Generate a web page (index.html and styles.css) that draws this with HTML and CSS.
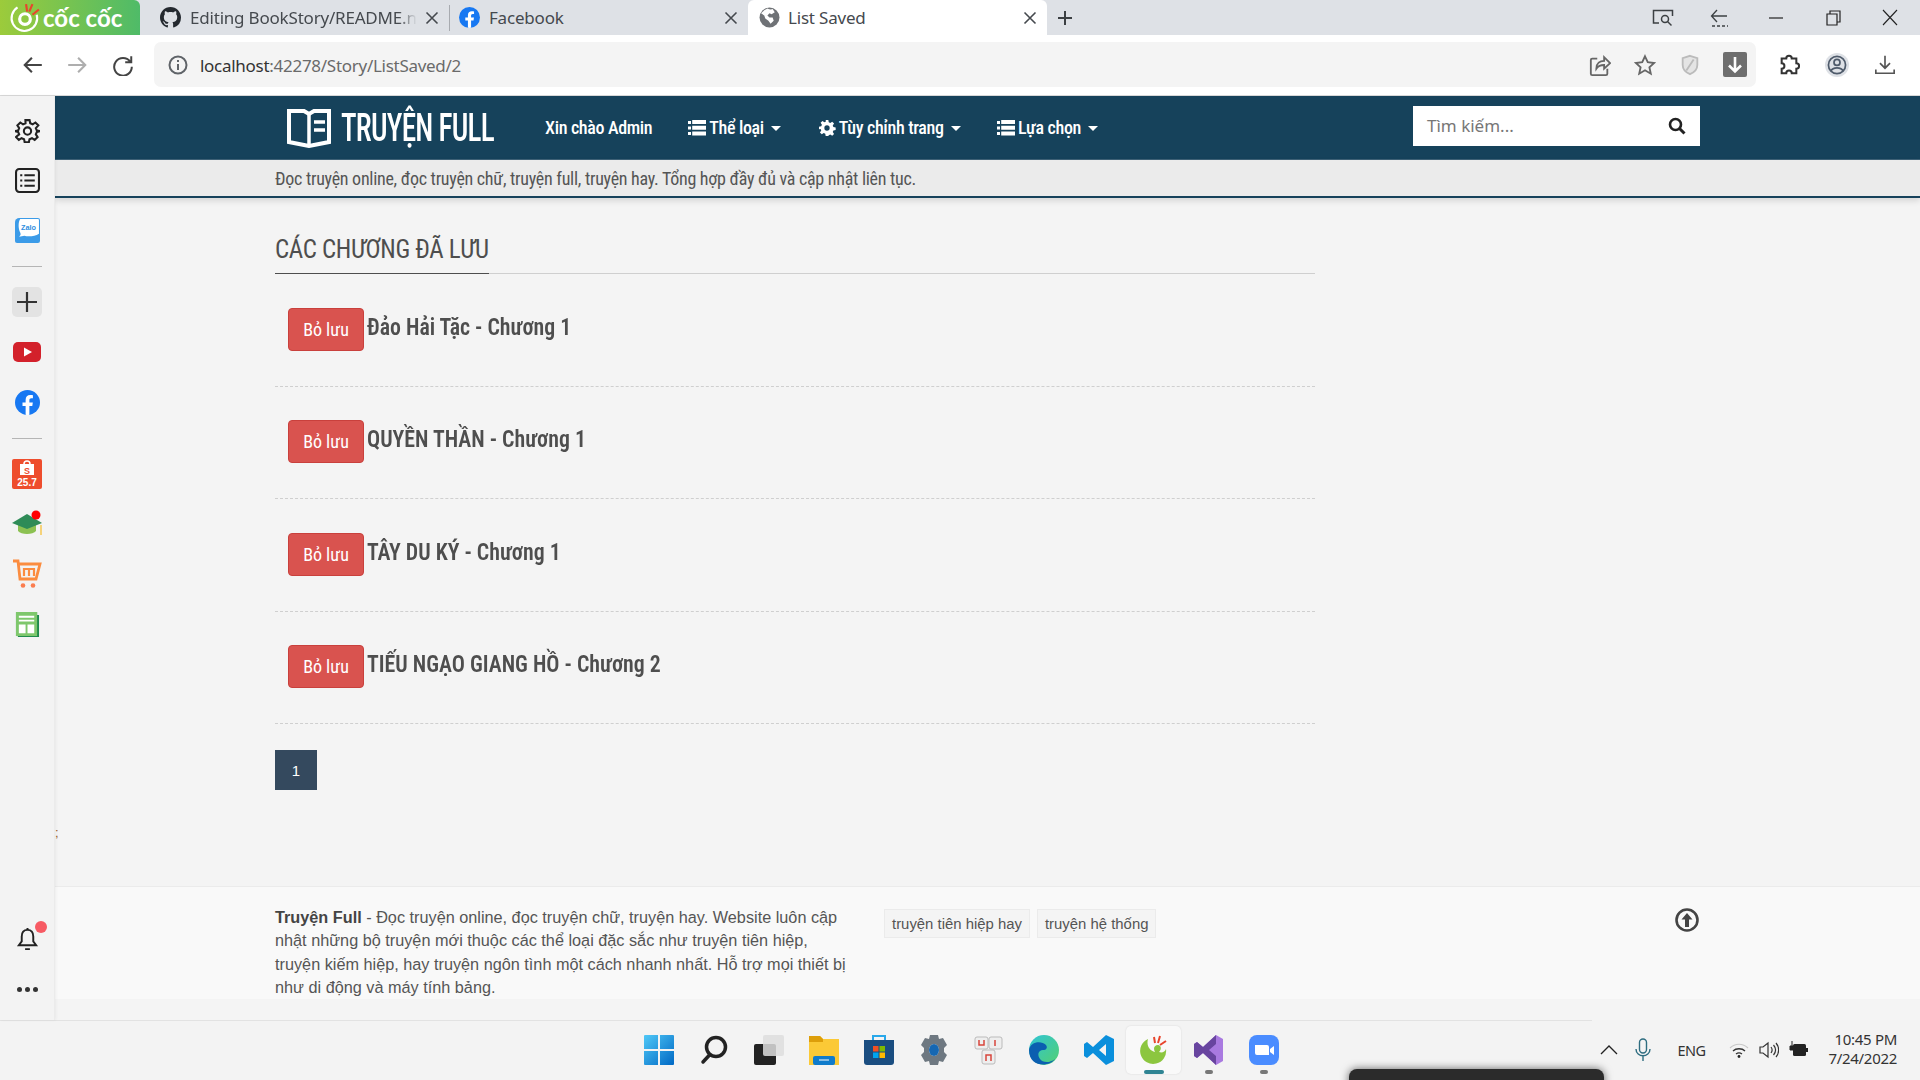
FILE: index.html
```html
<!DOCTYPE html>
<html lang="vi">
<head>
<meta charset="utf-8">
<title>List Saved</title>
<link rel="stylesheet" href="styles.css">
</head>
<body>
<svg class="defs" width="0" height="0">
  <symbol id="x" viewBox="0 0 14 14"><path d="M1.5 1.5l11 11M12.500 1.500l-11 11" fill="none" stroke="currentColor" stroke-width="1.6"/></symbol>
  <symbol id="fb" viewBox="0 0 24 24"><circle cx="12" cy="12" r="12" fill="#1778f2"/><path d="M16.600 15.400l.5-3.400h-3.300V9.800c0-.9.500-1.800 1.900-1.800h1.500V5.100s-1.300-.2-2.600-.2c-2.700 0-4.400 1.600-4.400 4.600V12H7.200v3.400h3v8.400c.6.100 1.200.2 1.800.2s1.200-.1 1.800-.2v-8.400z" fill="#fff"/></symbol>
  <symbol id="bars" viewBox="0 0 18 16"><path d="M0 1h3v3H0zM0 6.500h3v3H0zM0 12h3v3H0zM4.200 0H18v4H4.200zM4.200 5.800H18v4H4.200zM4.200 11.500H18v4H4.200z" fill="#fff"/></symbol>
</svg>

<header class="tabstrip">
  <div class="brand">
    <svg class="brand-mark" viewBox="0 0 30 30"><path d="M8 5a12 12 0 1 0 18 7" fill="none" stroke="#fff" stroke-width="2"/><circle cx="15" cy="16" r="5" fill="none" stroke="#fff" stroke-width="3"/><path d="M16 2l1 7M22 2l-3 7M28 7l-6 5" stroke="#e8452c" stroke-width="2"/></svg>
    <span class="brand-name">cốc cốc</span>
  </div>
  <div class="tab tab-github">
    <svg class="tab-icon" viewBox="0 0 16 16"><path fill="#24292f" d="M8 0C3.580 0 0 3.580 0 8c0 3.540 2.290 6.530 5.470 7.590.4.070.55-.17.55-.38 0-.19-.01-.82-.01-1.490-2.010.37-2.530-.49-2.690-.94-.09-.23-.48-.94-.82-1.130-.28-.15-.68-.52-.01-.53.63-.01 1.080.58 1.230.82.720 1.210 1.870.870 2.330.660.070-.520.280-.870.510-1.070-1.780-.2-3.640-.89-3.640-3.950 0-.870.310-1.590.820-2.150-.08-.2-.36-1.020.08-2.120 0 0 .67-.21 2.200.82.640-.18 1.320-.27 2-.27s1.360.09 2 .27c1.530-1.040 2.200-.82 2.200-.82.440 1.100.16 1.920.08 2.120.51.560.82 1.270.82 2.150 0 3.070-1.870 3.750-3.650 3.950.29.250.54.730.54 1.480 0 1.070-.01 1.930-.01 2.200 0 .21.150.46.550.38A8.010 8.010 0 0 0 16 8c0-4.420-3.580-8-8-8z"/></svg>
    <span class="tab-title tab-title-fade">Editing BookStory/README.n</span>
    <svg class="tab-close"><use href="#x"/></svg>
  </div>
  <i class="tab-sep"></i>
  <div class="tab tab-fb">
    <svg class="tab-icon"><use href="#fb"/></svg>
    <span class="tab-title">Facebook</span>
    <svg class="tab-close"><use href="#x"/></svg>
  </div>
  <div class="tab tab-active">
    <svg class="tab-icon" viewBox="0 0 20 20"><circle cx="10" cy="10" r="9.500" fill="#6f7276"/><path d="M8 1.500c2 1 4 1 5 .5l2 3-3 2-2-1-2 2 2 2 3 0 1 3-3 3-2-3-3-2-1-3-3-2 3-3z" fill="#fff"/></svg>
    <span class="tab-title">List Saved</span>
    <svg class="tab-close"><use href="#x"/></svg>
  </div>
  <svg class="tab-plus" viewBox="0 0 16 16"><path d="M8 1v14M1 8h14" stroke="#3c4043" stroke-width="2"/></svg>
  <div class="win-controls">
    <svg class="win-ic" viewBox="0 0 22 20"><path d="M7 15H1.500V2.500h19V8" fill="none" stroke="#3c4043" stroke-width="1.500"/><circle cx="13" cy="11" r="3.500" fill="none" stroke="#3c4043" stroke-width="1.500"/><path d="M15.500 13.500l4 4" stroke="#3c4043" stroke-width="1.500"/></svg>
    <svg class="win-ic" viewBox="0 0 22 20"><path d="M18 8H3M8 2L2.500 8 8 14" fill="none" stroke="#3c4043" stroke-width="1.300"/><path d="M3 18h16" stroke="#3c4043" stroke-width="1.300" stroke-dasharray="3 2"/></svg>
    <svg class="win-ic" viewBox="0 0 22 20"><path d="M3 10h14" stroke="#222" stroke-width="1.200"/></svg>
    <svg class="win-ic" viewBox="0 0 22 20"><path d="M4 6h10v11H4zM7 6V3h10v11h-3" fill="none" stroke="#222" stroke-width="1.200"/></svg>
    <svg class="win-ic win-last" viewBox="0 0 22 20"><path d="M3 2l14 15M17 2L3 17" stroke="#222" stroke-width="1.100"/></svg>
  </div>
</header>

<nav class="toolbar">
  <svg class="tool" viewBox="0 0 20 20"><path d="M18 10H3M9 3.500L2.500 10 9 16.500" fill="none" stroke="#444" stroke-width="1.900"/></svg>
  <svg class="tool" viewBox="0 0 20 20"><path d="M2 10h15M11 3.500l6.500 6.500-6.500 6.500" fill="none" stroke="#aeaeae" stroke-width="1.900"/></svg>
  <svg class="tool tool-reload" viewBox="0 0 20 20"><path d="M16.500 7A8 8 0 1 0 18 11.500M17.500 2v5.500H12" fill="none" stroke="#444" stroke-width="1.800"/></svg>
  <div class="omnibox">
    <svg class="omni-info" viewBox="0 0 20 20"><circle cx="10" cy="10" r="8.500" fill="none" stroke="#5f6368" stroke-width="2"/><path d="M10 9v6M10 5v2" stroke="#5f6368" stroke-width="2"/></svg>
    <span class="url"><b>localhost</b>:42278/Story/ListSaved/2</span>
    <div class="omni-actions">
      <svg class="omni-ic" viewBox="0 0 24 24"><path d="M9 5H3.500a1.500 1.500 0 0 0-1.500 1.500v15A1.500 1.500 0 0 0 3.500 23h15a1.500 1.500 0 0 0 1.500-1.500V16" fill="none" stroke="#666" stroke-width="2"/><path d="M8 16c0-6 4-8.500 8.500-8.500V3.500L23 10l-6.500 6v-4c-4 0-6.500 1-8.500 4z" fill="none" stroke="#666" stroke-width="2"/></svg>
      <svg class="omni-ic" viewBox="0 0 24 24"><path d="M12 2.500l3 6.500 7 .8-5.200 4.700 1.500 7L12 17.800 5.700 21.500l1.500-7L2 9.800 9 9z" fill="none" stroke="#666" stroke-width="2"/></svg>
      <svg class="omni-ic" viewBox="0 0 24 24"><path d="M12 2l8 2.500V12c0 5-3.500 8-8 10-4.500-2-8-5-8-10V4.500z" fill="#e4e4e4" stroke="#bbb" stroke-width="2"/><path d="M16 6L8 18" stroke="#bbb" stroke-width="2"/></svg>
      <span class="omni-dl"><svg viewBox="0 0 16 18" width="16" height="18"><path d="M8 1v14M2 9.500l6 6 6-6" fill="none" stroke="#fff" stroke-width="2.600"/></svg></span>
    </div>
  </div>
  <div class="tool-right">
    <svg class="omni-ic" viewBox="0 0 24 24"><path d="M9 5a3 3 0 0 1 6 0h5v5a3 3 0 0 1 0 6v5h-5a3 3 0 0 0-6 0H4v-5a3 3 0 0 0 0-6V5z" fill="none" stroke="#333" stroke-width="2.200"/></svg>
    <svg class="omni-ic profile" viewBox="0 0 28 28"><circle cx="14" cy="14" r="14" fill="#dee1e6"/><circle cx="14" cy="14" r="10" fill="none" stroke="#4f5b6b" stroke-width="2"/><circle cx="14" cy="11" r="3.500" fill="none" stroke="#4f5b6b" stroke-width="2"/><path d="M7 21c2-5 12-5 14 0" fill="none" stroke="#4f5b6b" stroke-width="2"/></svg>
    <svg class="omni-ic" viewBox="0 0 24 24"><path d="M12 2v13M6.500 10l5.500 5.500 5.500-5.500M2 17v4h20v-4" fill="none" stroke="#555" stroke-width="1.800"/></svg>
  </div>
</nav>

<div class="window">
  <aside class="sidebar">
    <div class="slot"><svg class="side-ic" viewBox="0 0 24 24"><path d="M10 2h4l.6 3 2.400 1 2.600-1.700 2.800 2.800L20 9.700l1 2.300 3 .6v0l-3 .8-1 2.300 1.700 2.600-2.800 2.800-2.600-1.700-2.400 1-.6 3h-4l-.6-3-2.400-1-2.600 1.700-2.800-2.800L4 15.700 3 13.400 0 12.600l3-.6 1-2.300-1.700-2.600 2.800-2.800L7.700 6l2.400-1z" fill="none" stroke="#222" stroke-width="2"/><circle cx="12" cy="12.500" r="3.500" fill="none" stroke="#222" stroke-width="2"/></svg></div>
    <div class="slot"><svg class="side-ic" viewBox="0 0 24 24"><rect x="1" y="1" width="22" height="22" rx="3" fill="none" stroke="#222" stroke-width="2"/><path d="M5 7h2M9 7h10M5 12h2M9 12h10M5 17h2M9 17h10" stroke="#222" stroke-width="2"/></svg></div>
    <div class="slot"><svg class="side-ic" viewBox="0 0 24 24"><path d="M4 0h18a2 2 0 0 1 2 2v20a2 2 0 0 1-2 2H2a2 2 0 0 1-2-2V4a4 4 0 0 1 4-4z" fill="#3b9be8"/><path d="M5 1h17a1 1 0 0 1 1 1v13c-4 3-11 3-14 2l-5 1c1-1 2-2 1-4C3 10 3 4 5 1z" fill="#fff"/><text x="13" y="11.500" class="zalo-t">Zalo</text></svg></div>
    <hr class="side-rule">
    <div class="slot"><span class="plus-box"><svg viewBox="0 0 22 22" width="22" height="22"><path d="M11 1v20M1 11h20" stroke="#333" stroke-width="2.200"/></svg></span></div>
    <div class="slot"><svg class="side-ic yt" viewBox="0 0 28 20"><rect width="28" height="20" rx="5" fill="#d3212b"/><path d="M11 5.500l8 4.500-8 4.500z" fill="#fff"/></svg></div>
    <div class="slot"><svg class="side-ic"><use href="#fb"/></svg></div>
    <hr class="side-rule">
    <div class="slot"><svg class="side-ic shopee" viewBox="0 0 30 30"><rect width="30" height="30" rx="2" fill="#ee4d2d"/><path d="M8 5h14v11H8z" fill="#fff"/><path d="M12 5a3 3 0 0 1 6 0" fill="none" stroke="#fff" stroke-width="1.500"/><text x="15" y="14.500" class="shopee-s">S</text><text x="15" y="27" class="shopee-t">25.7</text></svg></div>
    <div class="slot"><svg class="side-ic shopee" viewBox="0 0 30 26"><path d="M6 13h18v7c-3 4-15 4-18 0z" fill="#8cc152"/><path d="M0 12L15 3l15 9-15 6z" fill="#2e8b57"/><circle cx="24" cy="4" r="4.500" fill="#f00"/><path d="M28 14h2v10h-2z" fill="#f5d27a"/></svg></div>
    <div class="slot"><svg class="side-ic shopee" viewBox="0 0 30 30"><path d="M1 2h5l2 18h16l4-15H7" fill="none" stroke="#fb8c3f" stroke-width="2.800"/><path d="M12 17v-7h10v7M17 10v7" fill="none" stroke="#fb8c3f" stroke-width="2.200"/><circle cx="11" cy="26.500" r="2.300" fill="#fb7d4f"/><circle cx="21" cy="26.500" r="2.300" fill="#fb7d4f"/></svg></div>
    <div class="slot"><svg class="side-ic" viewBox="0 0 26 26"><path d="M1 0h22v3h2v23H3v-1H1z" fill="#1f8a4c"/><path d="M1 0h22v25H1z" fill="#7ec76c"/><path d="M4 4h16v2H4zM4 8h16v2H4zM4 13h7v9H4zM13 13h7v9h-7z" fill="#fff"/></svg></div>
    <div class="side-bottom">
      <div class="slot bell-slot">
        <svg class="side-ic" viewBox="0 0 24 26"><path d="M12 3c-4.500 0-6 3-6 7v5l-3 4h18l-3-4v-5c0-4-1.500-7-6-7z" fill="none" stroke="#222" stroke-width="2"/><path d="M9.500 23h5M12 1v2" stroke="#222" stroke-width="2"/></svg>
        <i class="bell-dot"></i>
      </div>
      <div class="slot dots"><i></i><i></i><i></i></div>
    </div>
  </aside>

  <main class="page">
    <div class="masthead">
      <div class="mast-inner">
        <a class="logo">
          <svg class="logo-mark" viewBox="0 0 44 40"><path d="M2 3h15l5 3 5-3h15v31l-20 4-20-4z" fill="none" stroke="#fff" stroke-width="4"/><path d="M22 6v30M27 14h11M27 22h11" stroke="#fff" stroke-width="3.500" fill="none"/></svg>
          <span class="logo-text">TRUYỆN FULL</span>
        </a>
        <span class="nav-item nav-hello">Xin chào Admin</span>
        <span class="nav-item nav-genre"><svg class="nav-ic"><use href="#bars"/></svg>Thể loại<i class="caret"></i></span>
        <span class="nav-item nav-custom"><svg class="nav-ic" viewBox="0 0 24 24"><path fill-rule="evenodd" fill="#fff" d="M10 0h4l.6 3.500 2.300 1 2.900-2 2.800 2.800-2 2.900 1 2.300 3.400.6v4l-3.400.6-1 2.300 2 2.900-2.800 2.800-2.900-2-2.300 1L14 24h-4l-.6-3.500-2.300-1-2.900 2-2.800-2.800 2-2.900-1-2.300L0 14v-4l3.400-.6 1-2.300-2-2.900 2.800-2.800 2.900 2 2.300-1zM12 8a4 4 0 1 0 0 8 4 4 0 0 0 0-8z"/></svg>Tùy chỉnh trang<i class="caret"></i></span>
        <span class="nav-item nav-choice"><svg class="nav-ic"><use href="#bars"/></svg>Lựa chọn<i class="caret"></i></span>
        <div class="search">
          <span class="search-ph">Tìm kiếm...</span>
          <svg class="search-ic" viewBox="0 0 18 18"><circle cx="7.500" cy="7.500" r="5.500" fill="none" stroke="#222" stroke-width="2.600"/><path d="M11.500 11.500l5 5" stroke="#222" stroke-width="3"/></svg>
        </div>
      </div>
    </div>
    <div class="tagline"><span>Đọc truyện online, đọc truyện chữ, truyện full, truyện hay. Tổng hợp đầy đủ và cập nhật liên tục.</span></div>

    <section class="content">
      <div class="section-head"><h2>CÁC CHƯƠNG ĐÃ LƯU</h2></div>
      <div class="row"><a class="btn">Bỏ lưu</a><span class="row-title">Đảo Hải Tặc - Chương 1</span></div>
      <div class="row"><a class="btn">Bỏ lưu</a><span class="row-title">QUYỀN THẦN - Chương 1</span></div>
      <div class="row"><a class="btn">Bỏ lưu</a><span class="row-title">TÂY DU KÝ - Chương 1</span></div>
      <div class="row"><a class="btn">Bỏ lưu</a><span class="row-title">TIẾU NGẠO GIANG HỒ - Chương 2</span></div>
      <div class="pager"><span class="page-no">1</span></div>
      <span class="stray">;</span>
    </section>

    <footer class="site-footer">
      <p class="about"><b>Truyện Full</b> - Đọc truyện online, đọc truyện chữ, truyện hay. Website luôn cập nhật những bộ truyện mới thuộc các thể loại đặc sắc như truyện tiên hiệp, truyện kiếm hiệp, hay truyện ngôn tình một cách nhanh nhất. Hỗ trợ mọi thiết bị như di động và máy tính bảng.</p>
      <div class="tags"><span class="tag">truyện tiên hiệp hay</span><span class="tag">truyện hệ thống</span></div>
      <svg class="to-top" viewBox="0 0 24 24"><circle cx="12" cy="12" r="10.500" fill="none" stroke="#444" stroke-width="2.600"/><path d="M12 5l5.500 6.500H14V19h-4v-7.500H6.500z" fill="#444"/></svg>
    </footer>
    <div class="footer-gap"></div>
  </main>
</div>

<div class="taskbar">
  <div class="task-icons">
    <span class="task"><svg viewBox="0 0 30 30"><defs><linearGradient id="win" x1="0" y1="0" x2="1" y2="1"><stop offset="0" stop-color="#4fc8f7"/><stop offset="1" stop-color="#0068c4"/></linearGradient></defs><path d="M0 1a1 1 0 0 1 1-1h13v14H0zM16 0h13a1 1 0 0 1 1 1v13H16zM0 16h14v14H1a1 1 0 0 1-1-1zM16 16h14v13a1 1 0 0 1-1 1H16z" fill="url(#win)"/></svg></span>
    <span class="task"><svg viewBox="0 0 30 30"><circle cx="17" cy="12" r="9.500" fill="none" stroke="#222" stroke-width="3.500"/><path d="M10.500 20L4 27" stroke="#222" stroke-width="3.500" stroke-linecap="round"/></svg></span>
    <span class="task"><svg viewBox="0 0 30 30"><rect x="0" y="9" width="22" height="21" rx="2" fill="#222"/><rect x="9" y="0" width="21" height="21" rx="2" fill="#ddd" opacity=".85"/></svg></span>
    <span class="task"><svg viewBox="0 0 30 30"><path d="M0 1h11l3 3h16v26H0z" fill="#fbc936"/><path d="M0 1h11l3 3v3H0z" fill="#dd9e0a"/><rect x="4" y="21" width="22" height="9" rx="2" fill="#0f7bcb"/><path d="M10 25h10" stroke="#fff" stroke-width="1"/></svg></span>
    <span class="task"><svg viewBox="0 0 30 30"><path d="M9 5V1h12v4" fill="none" stroke="#28a8ea" stroke-width="2"/><path d="M0 5h30v22a3 3 0 0 1-3 3H3a3 3 0 0 1-3-3z" fill="#1a4d80"/><path d="M9 11h5.500v5.500H9z" fill="#f25022"/><path d="M15.500 11H21v5.500h-5.500z" fill="#7fba00"/><path d="M9 17.500h5.500V23H9z" fill="#00a4ef"/><path d="M15.500 17.500H21V23h-5.500z" fill="#ffb900"/></svg></span>
    <span class="task"><svg viewBox="0 0 30 30"><path fill-rule="evenodd" fill="#6e7881" d="M11 0h8l1 4 4-1 4 7-3 3v4l3 3-4 7-4-1-1 4h-8l-1-4-4 1-4-7 3-3v-4L2 10l4-7 4 1zM15 9a5 6 0 1 0 0 12 5 6 0 0 0 0-12z"/><ellipse cx="15" cy="15" rx="5" ry="6" fill="#1667b2"/></svg></span>
    <span class="task"><svg viewBox="0 0 30 30"><rect x="1" y="2" width="13" height="12" rx="2" fill="#eee" stroke="#bbb"/><rect x="15" y="2" width="13" height="12" rx="2" fill="#eee" stroke="#bbb"/><rect x="8" y="15" width="13" height="14" rx="2" fill="#eee" stroke="#bbb"/><path d="M5 5v5h5V5M21 5v6M12 26v-6h5v6" fill="none" stroke="#d8453c" stroke-width="1.500"/></svg></span>
    <span class="task"><svg viewBox="0 0 30 30"><defs><linearGradient id="edge" x1="0" y1="0" x2="1" y2="1"><stop offset="0" stop-color="#2fc4d6"/><stop offset="1" stop-color="#53d071"/></linearGradient></defs><circle cx="15" cy="15" r="15" fill="url(#edge)"/><path d="M0 15C1 7 12 5 17 10c2 3 0 5-2 5-6 0-7 5-4 9 2 3 9 5 15 0-5 8-26 9-26-9z" fill="#0b5fb0"/></svg></span>
    <span class="task"><svg viewBox="0 0 30 30"><path d="M22 0l8 4v22l-8 4-13-12-6 5-3-2v-12l3-2 6 5zM22 9l-7 6 7 6z" fill="#0a8fdc"/></svg></span>
    <span class="task task-on"><svg viewBox="0 0 30 30"><path fill-rule="evenodd" fill="#8cc63f" d="M9 4a13 13 0 1 0 18 10c-1 3-4 4-7 3 3-3 2-7-1-7-4 0-5 4-3 7-5-1-9-6-7-13z"/><path d="M15 2l1 6M21 1l-2 7M27 6l-6 4" stroke="#e8452c" stroke-width="2"/></svg></span>
    <span class="task task-run"><svg viewBox="0 0 30 30"><path d="M22 0l7 4v22l-7 4L9 18l-6 5-3-2V9l3-2 6 5z" fill="#a97ae0"/><path d="M0 9l3-2 6 5 13-12v9l-7 6 7 6v9L9 18l-6 5-3-2z" fill="#68459f"/></svg></span>
    <span class="task task-run"><svg viewBox="0 0 30 30"><rect width="30" height="30" rx="8" fill="#4a8cff"/><path d="M6 10h12a2 2 0 0 1 2 2v8H8a2 2 0 0 1-2-2zM21 14l4-3v9l-4-3z" fill="#fff"/></svg></span>
  </div>
  <div class="tray">
    <svg class="tray-chevron" viewBox="0 0 18 10"><path d="M1 9l8-8 8 8" fill="none" stroke="#222" stroke-width="1.300"/></svg>
    <svg class="tray-mic" viewBox="0 0 16 24"><rect x="4.500" y="1" width="7" height="14" rx="3.500" fill="none" stroke="#2e6d80" stroke-width="1.400"/><path d="M1 11c0 9 14 9 14 0M8 18v5" fill="none" stroke="#2e6d80" stroke-width="1.400"/></svg>
    <span class="tray-lang">ENG</span>
    <svg class="tray-wifi" viewBox="0 0 20 16"><path d="M1 6c5-5 13-5 18 0" fill="none" stroke="#c8c8c8" stroke-width="1.200"/><path d="M4 9c3-3 9-3 12 0M7 12c2-1.500 4-1.500 6 0" fill="none" stroke="#333" stroke-width="1.300"/><circle cx="10" cy="14.500" r="1.400" fill="#222"/></svg>
    <svg class="tray-vol" viewBox="0 0 20 18"><path d="M1 6h3l5-4v14l-5-4H1z" fill="none" stroke="#333" stroke-width="1.200"/><path d="M12 6c1.500 2 1.500 4 0 6M14.500 4c2.500 3 2.500 7 0 10M17 2c3.500 4 3.500 10 0 14" fill="none" stroke="#333" stroke-width="1.200"/></svg>
    <svg class="tray-batt" viewBox="0 0 20 18"><path d="M4 0v5M2 5h4v4H2z" stroke="#222" fill="#222"/><rect x="5" y="3" width="13" height="12" rx="1.500" fill="#222"/><rect x="18" y="7" width="2" height="4" fill="#222"/></svg>
    <div class="clock"><span>10:45 PM</span><span>7/24/2022</span></div>
  </div>
  <div class="popup"></div>
</div>
</body>
</html>
```
FILE: styles.css
```css
* { box-sizing: border-box; }
html, body { margin: 0; height: 1080px; overflow: hidden; }
body {
  position: relative;
  display: flex;
  flex-direction: column;
  background: #f4f4f4;
  font-family: "Roboto Condensed", "Liberation Sans Narrow", Roboto, sans-serif;
  color: #4e4e4e;
}
.defs { position: absolute; }

/* browser tabs */
.tabstrip {
  height: 35px;
  flex: none;
  display: flex;
  align-items: center;
  background: #dee1e6;
  font-family: "Noto Sans", sans-serif;
  font-size: 17px;
  color: #45494e;
}
.brand {
  width: 140px;
  height: 35px;
  flex: none;
  display: flex;
  align-items: center;
  gap: 2px;
  padding-left: 9px;
  background: linear-gradient(90deg, #9ccb3b, #4fbb68);
  border-top-right-radius: 6px;
}
.brand-mark { width: 32px; height: 32px; flex: none; }
.brand-name { color: #fff; font: 700 24px "Lato", sans-serif; white-space: nowrap; }
.tab { height: 35px; display: flex; align-items: center; flex: none; }
.tab-github { width: 309px; padding-left: 20px; }
.tab-sep { width: 1px; height: 26px; flex: none; background: #a8abb0; margin-right: 9px; }
.tab-fb { width: 289px; }
.tab-active {
  width: 299px;
  padding-left: 11px;
  background: #fff;
  border-radius: 6px 6px 0 0;
}
.tab-icon { width: 21px; height: 21px; flex: none; }
.tab-title {
  margin-left: 9px;
  white-space: nowrap;
  letter-spacing: -.2px;
}
.tab-active .tab-title { margin-left: 8px; }
.tab-title-fade { -webkit-mask-image: linear-gradient(90deg, #000 92%, transparent); }
.tab-close { width: 14px; height: 14px; flex: none; margin-left: auto; margin-right: 10px; }
.tab-plus { width: 16px; height: 16px; margin-left: 10px; flex: none; }
.win-controls { margin-left: auto; display: flex; align-items: center; }
.win-ic { width: 22px; height: 20px; margin-left: 35px; }
.win-last { margin-right: 18px; }

/* address bar */
.toolbar {
  height: 61px;
  flex: none;
  display: flex;
  align-items: center;
  background: #fff;
  border-bottom: 1px solid #d8d8d8;
  padding-bottom: 1px;
}
.tool { width: 22px; height: 22px; margin-left: 22px; flex: none; }
.tool-reload { margin-left: 24px; }
.omnibox {
  width: 1602px;
  height: 45px;
  margin-left: 20px;
  flex: none;
  display: flex;
  align-items: center;
  background: #f4f4f4;
  border-radius: 7px;
  padding: 0 9px 0 14px;
}
.omni-info { width: 20px; height: 20px; flex: none; }
.url {
  margin: 1px 0 0 12px;
  font: 17px "Noto Sans", sans-serif;
  letter-spacing: -.28px;
  color: #6a6a6a;
}
.url b { font-weight: 400; color: #333; }
.omni-actions { margin-left: auto; display: flex; align-items: center; gap: 23px; }
.omni-ic { width: 22px; height: 24px; flex: none; }
.omni-dl {
  width: 24px;
  height: 25px;
  margin-left: -1px;
  display: flex;
  align-items: center;
  justify-content: center;
  background: #6e6e6e;
  border-radius: 2px;
}
.tool-right { margin-left: 22px; display: flex; align-items: center; gap: 25px; }
.profile { width: 24px; height: 26px; }

/* app window */
.window { flex: 1; min-height: 0; display: flex; }
.sidebar {
  width: 55px;
  flex: none;
  display: flex;
  flex-direction: column;
  padding-top: 9px;
  background: #f3f3f3;
  border-right: 1px solid #ebebeb;
  box-shadow: 1px 0 3px rgba(0,0,0,.05);
  z-index: 2;
}
.slot { height: 50px; flex: none; display: flex; align-items: center; justify-content: center; }
.side-ic { width: 25px; height: 25px; }
.yt { width: 28px; height: 20px; }
.shopee { width: 30px; height: 30px; }
.side-rule { width: 30px; height: 1px; margin: 10.500px auto; border: 0; background: #b5b5b5; flex: none; }
.zalo-t { font: 700 7px "Liberation Sans", sans-serif; fill: #2f8fe0; text-anchor: middle; }
.shopee-s { font: 700 9px "Liberation Sans", sans-serif; fill: #ee4d2d; text-anchor: middle; }
.shopee-t { font: 700 10px "Liberation Sans", sans-serif; fill: #fff; text-anchor: middle; }
.plus-box {
  width: 30px;
  height: 30px;
  display: flex;
  align-items: center;
  justify-content: center;
  background: #e3e3e3;
  border-radius: 5px;
}
.side-bottom { margin-top: auto; padding-bottom: 6px; }
.bell-slot { position: relative; }
.bell-dot {
  position: absolute;
  top: 7px;
  left: 35px;
  width: 12px;
  height: 12px;
  border-radius: 50%;
  background: #f75a63;
}
.dots { gap: 3px; }
.dots i { width: 5px; height: 5px; border-radius: 50%; background: #333; }

.page { flex: 1; min-width: 0; display: flex; flex-direction: column; }
.masthead { height: 64px; flex: none; background: #16425b; border-bottom: 1px solid #3f6277; }
.mast-inner {
  height: 100%;
  display: flex;
  align-items: center;
  padding-left: 232px;
  color: #fff;
}
.logo { display: flex; align-items: center; flex: none; }
.logo-mark { width: 44px; height: 40px; flex: none; }
.logo-text {
  width: 153px;
  margin-left: 10px;
  font-size: 38px;
  font-weight: 500;
  color: #fff;
  white-space: nowrap;
  letter-spacing: -1px;
  transform: scaleX(.77);
  transform-origin: left center;
}
.nav-item { display: flex; align-items: center; font-size: 18px; font-weight: 500; letter-spacing: -.35px; white-space: nowrap; }
.nav-hello { margin-left: 51px; }
.nav-genre { margin-left: 36px; }
.nav-custom { margin-left: 37px; }
.nav-choice { margin-left: 36.500px; }
.nav-ic { width: 18px; height: 16px; margin-right: 3px; flex: none; }
.caret {
  width: 0;
  height: 0;
  margin-left: 7px;
  margin-top: 2px;
  border-style: solid;
  border-width: 5px 5px 0;
  border-color: #fff transparent transparent;
}
.search {
  width: 287px;
  height: 40px;
  flex: none;
  margin-left: auto;
  margin-right: 220px;
  margin-top: -3px;
  display: flex;
  align-items: center;
  justify-content: space-between;
  padding: 0 14px;
  background: #fff;
  color: #777;
  font: 17px "Noto Sans", sans-serif;
  letter-spacing: 0;
}
.search-ph { margin-top: -2px; }
.search-ic { width: 18px; height: 18px; }

.tagline {
  height: 38px;
  flex: none;
  display: flex;
  align-items: center;
  padding-left: 220px;
  background: #ebebeb;
  border-bottom: 2px solid #16425b;
  box-shadow: 0 3px 6px rgba(0,0,0,.12);
  font-size: 18px;
  letter-spacing: -.28px;
  color: #555;
}

.content { position: relative; flex: 1; min-height: 0; padding: 0 0 0 220px; }
.section-head {
  width: 1040px;
  height: 76px;
  padding-top: 35px;
  border-bottom: 1px solid #cfcfcf;
}
.section-head h2 {
  width: max-content;
  height: 41px;
  margin: 0;
  border-bottom: 1px solid #4e4e4e;
  font-size: 25px;
  font-weight: 400;
  letter-spacing: -.35px;
  line-height: 34px;
  color: #4e4e4e;
}
.row {
  width: 1040px;
  height: 112.500px;
  display: flex;
  align-items: flex-start;
  padding: 33.500px 0 0 13px;
  border-bottom: 1px dashed #cfcfcf;
}
.btn {
  width: 76px;
  height: 43px;
  flex: none;
  display: flex;
  align-items: center;
  justify-content: center;
  background: #d9534f;
  border: 1px solid #c9403c;
  border-radius: 4px;
  color: #fff;
  font-size: 18px;
}
.row-title {
  margin: 5px 0 0 3px;
  font-size: 24px;
  font-weight: 600;
  line-height: 28px;
  color: #4e4e4e;
  transform: scaleX(.91);
  transform-origin: left center;
}
.pager { margin-top: 26px; }
.page-no {
  width: 42px;
  height: 40px;
  display: flex;
  align-items: center;
  justify-content: center;
  background: #34495e;
  color: #fff;
  font: 400 15px "Liberation Sans", sans-serif;
}
.stray {
  position: absolute;
  left: 0;
  top: 627px;
  font: 13px "Liberation Sans", sans-serif;
  color: #9a5a2a;
}
.site-footer {
  height: 113px;
  flex: none;
  display: flex;
  align-items: flex-start;
  background: #f9f9f9;
  border-top: 1px solid #ebebeb;
  padding: 19px 0 0 220px;
  overflow: hidden;
}
.about {
  width: 574px;
  flex: none;
  margin: 0;
  font: 16.250px/23.400px "Liberation Sans", sans-serif;
  color: #555;
}
.about b { color: #444; }
.tags { margin-left: 35px; padding-top: 3px; display: flex; gap: 7px; flex: none; }
.tag {
  height: 29px;
  display: flex;
  align-items: center;
  padding: 0 7px;
  background: #f4f4f4;
  border: 1px solid #ebebeb;
  font: 14.900px "Liberation Sans", sans-serif;
  color: #555;
}
.to-top { width: 24px; height: 24px; margin-left: 519px; margin-top: 2px; flex: none; }
.footer-gap { height: 21px; flex: none; background: #f4f4f4; }

/* windows taskbar */
.taskbar {
  position: relative;
  height: 60px;
  flex: none;
  display: flex;
  align-items: center;
  background: #f3f3f3;
}
.taskbar::before {
  content: "";
  position: absolute;
  left: 0;
  top: 0;
  width: 1592px;
  height: 1px;
  background: #e2e2e2;
}
.task-icons { margin-left: 631px; display: flex; }
.task { position: relative; width: 55px; height: 48px; flex: none; display: flex; align-items: center; justify-content: center; padding-bottom: 1px; }
.task svg { width: 30px; height: 30px; }
.task-on { background: #f9f9f9; border-radius: 5px; box-shadow: 0 0 2px rgba(0,0,0,.12); }
.task-on::after, .task-run::after {
  content: "";
  position: absolute;
  bottom: 0;
  left: 50%;
  height: 4px;
  border-radius: 2px;
}
.task-on::after { width: 20px; margin-left: -10px; background: #2f8493; }
.task-run::after { width: 8px; margin-left: -4px; background: #777; }
.tray { margin-left: auto; display: flex; align-items: center; color: #333; font: 15px "Noto Sans", sans-serif; }
.tray-chevron { width: 18px; height: 10px; }
.tray-mic { width: 16px; height: 24px; margin-left: 17.500px; }
.tray-lang { margin-left: 26px; width: 30px; letter-spacing: -.5px; font-size: 14.500px; }
.tray-wifi { width: 20px; height: 16px; margin-left: 22px; }
.tray-vol { width: 20px; height: 18px; margin-left: 10px; }
.tray-batt { width: 20px; height: 18px; margin-left: 9px; }
.clock {
  margin: -2px 23px 0 20px;
  display: flex;
  flex-direction: column;
  align-items: flex-end;
  font-size: 15px;
  line-height: 19px;
  letter-spacing: -.3px;
}
.popup {
  position: absolute;
  left: 1349px;
  top: 49px;
  width: 255px;
  height: 60px;
  background: #2b2b2b;
  border-radius: 8px;
  box-shadow: 0 0 8px rgba(0,0,0,.6);
}
```
